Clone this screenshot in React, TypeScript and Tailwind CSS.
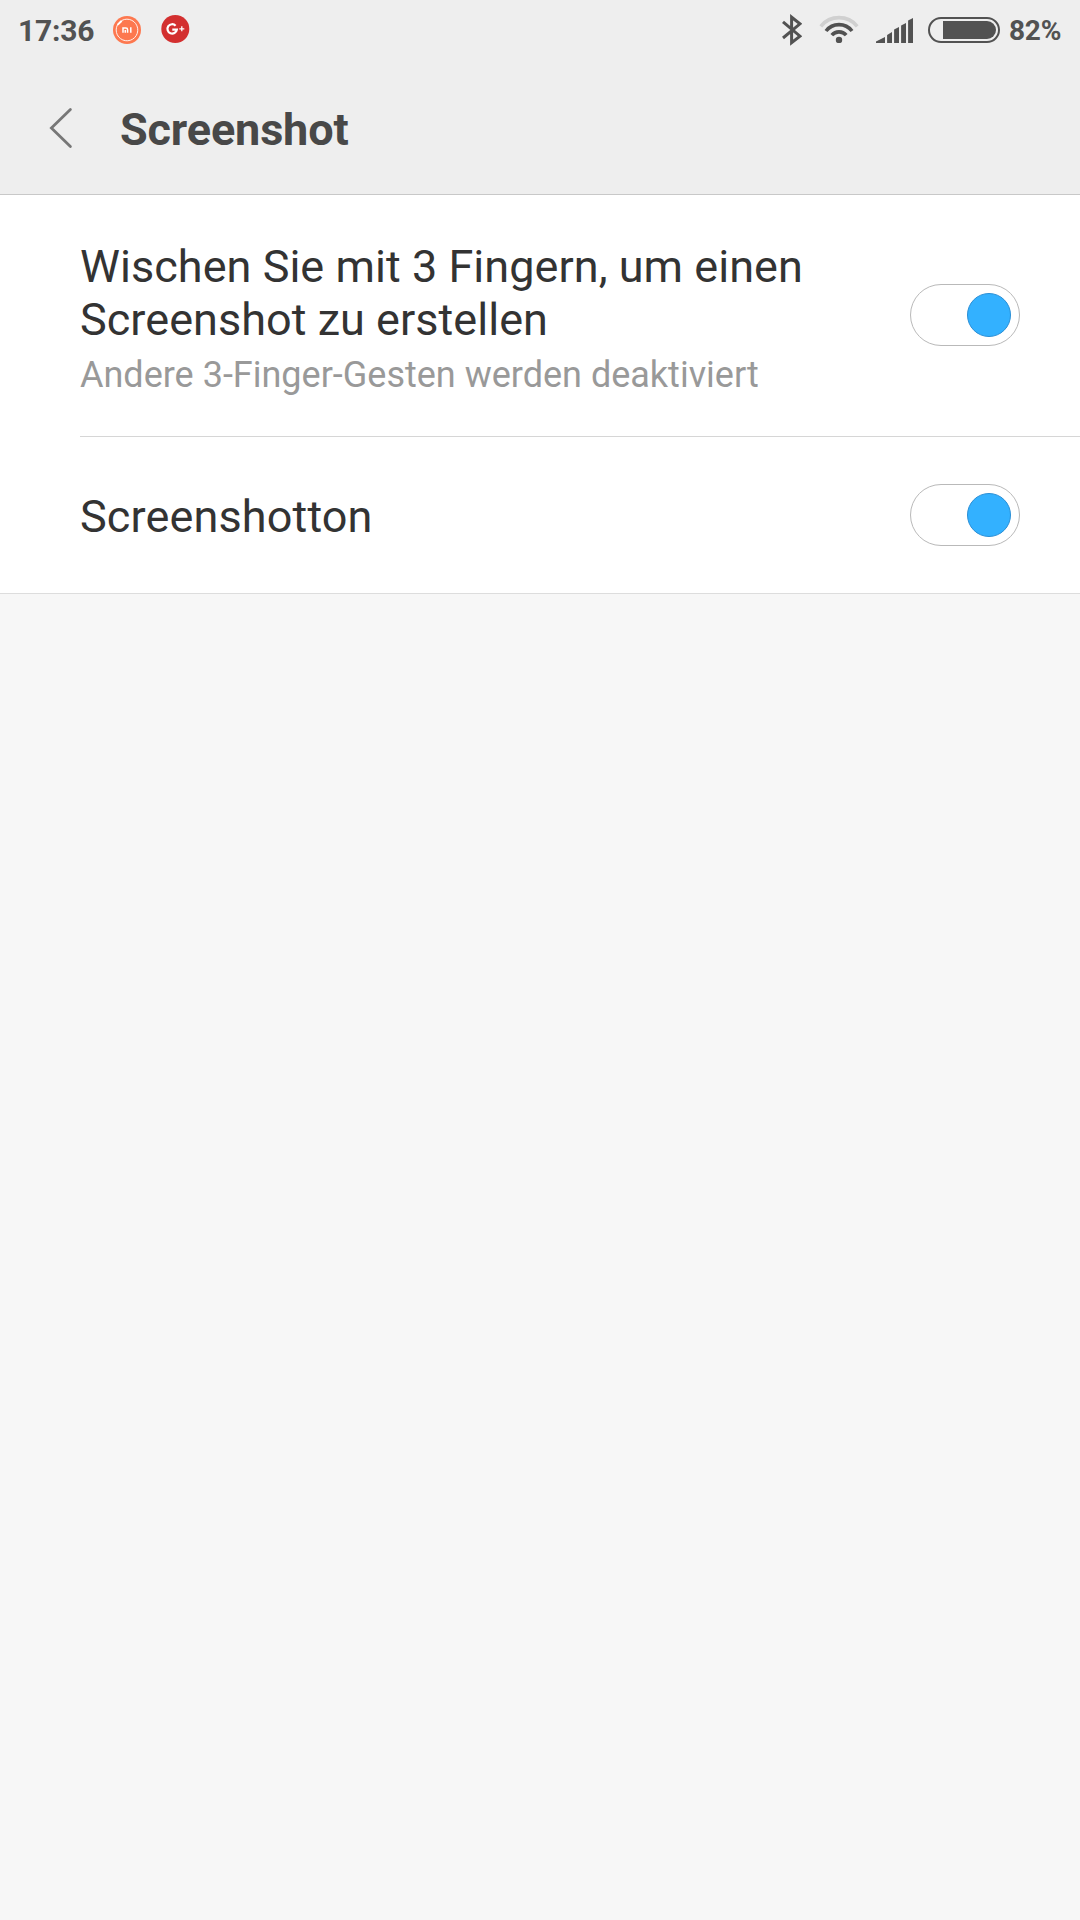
import React, { useState } from "react";

interface ToggleProps {
  checked: boolean;
  onChange: () => void;
}

const Toggle: React.FC<ToggleProps> = ({ checked, onChange }) => (
  <button
    type="button"
    role="switch"
    aria-checked={checked}
    onClick={onChange}
    className={`flex h-[62px] w-[110px] shrink-0 items-center rounded-full border border-[#b9b9b9] bg-white px-2 ${
      checked ? "justify-end" : "justify-start"
    }`}
  >
    <span
      className={`size-11 rounded-full border ${
        checked ? "border-[#2a8fd6] bg-[#33b1ff]" : "border-[#b9b9b9] bg-white"
      }`}
    />
  </button>
);

const MiIcon = () => (
  <svg className="ml-5 h-[30px] w-[30px]" viewBox="112 15 30 30" fill="none">
    <circle cx="127" cy="30" r="14" fill="#fd784f" />
    <path
      d="M122 20.4A10.8 10.8 0 1 1 117.4 25"
      stroke="#fff"
      strokeWidth="0.9"
    />
    <path d="M118 24.4L121.2 21.2" stroke="#fff" strokeWidth="2" strokeLinecap="round" />
    <path
      d="M123 32.8V28.1h2.9a1.7 1.7 0 0 1 1.7 1.7v3M125.3 29.9v2.9M130.8 27.3v5.5"
      stroke="#fff"
      strokeWidth="1.5"
    />
  </svg>
);

const GooglePlusIcon = () => (
  <svg className="ml-[18px] h-[30px] w-[30px]" viewBox="159.7 15 30 30" fill="none">
    <circle cx="175" cy="29" r="14" fill="#d32f2f" />
    <path
      d="M175.3 25.7A4.7 4.7 0 1 0 176.5 29.7H172"
      stroke="#fff"
      strokeWidth="2.2"
    />
    <path d="M179 28.8h5M181.5 26.3v5" stroke="#fff" strokeWidth="1.3" />
  </svg>
);

const BluetoothIcon = () => (
  <svg className="h-8 w-5" viewBox="782 14 20 32" fill="none">
    <path
      d="M783 21.8L800 36.2L791.6 42.6V17.2L800 23.8L783 38"
      stroke="#525252"
      strokeWidth="3"
    />
  </svg>
);

const WifiIcon = () => (
  <svg className="ml-[17px] h-8 w-10" viewBox="819 14 40 32" fill="none" strokeWidth="3.6">
    <path d="M820.8 26.3A23.5 23.5 0 0 1 857.2 26.3" stroke="#d0d0d0" />
    <path d="M826 31A16.5 16.5 0 0 1 852 31" stroke="#525252" />
    <path d="M831.8 35.2A9.5 9.5 0 0 1 846.2 35.2" stroke="#525252" />
    <circle cx="839" cy="39.9" r="3.2" fill="#525252" />
  </svg>
);

const SignalIcon = () => (
  <svg className="ml-[17px] h-8 w-[37px]" viewBox="876 14 37 32" fill="#525252">
    <path d="M876 41.5L885 37V43H876Z" />
    <path d="M887.1 35L892 32V43H887.1Z" />
    <path d="M894.1 29.5L899 27V43H894.1Z" />
    <path d="M901.1 25.5L906 23V43H901.1Z" />
    <path d="M908.1 20.5L913 18V43H908.1Z" />
  </svg>
);

const BatteryIcon = () => (
  <svg className="ml-[15px] h-8 w-[72px]" viewBox="928 14 72 32" fill="none">
    <rect x="929" y="18" width="70" height="24" rx="12" stroke="#525252" strokeWidth="2" />
    <path d="M943 21h44a9 9 0 0 1 0 18h-44z" fill="#525252" />
  </svg>
);

const StatusBar = () => (
  <div className="flex h-[60px] items-center pr-[19px] pl-[18px] font-bold text-[#525252]">
    <span className="w-[74px] text-[30px] tracking-[-0.2px] whitespace-nowrap">
      17:36
    </span>
    <MiIcon />
    <GooglePlusIcon />
    <div className="ml-auto flex items-center">
      <BluetoothIcon />
      <WifiIcon />
      <SignalIcon />
      <BatteryIcon />
      <span className="mt-0.5 ml-[9px] w-[52px] text-[28px] tracking-[-0.2px] whitespace-nowrap">
        82%
      </span>
    </div>
  </div>
);

const App: React.FC = () => {
  const [swipe, setSwipe] = useState(true);
  const [sound, setSound] = useState(true);

  return (
    <div className="min-h-screen bg-[#f7f7f7] font-['Roboto',sans-serif]">
      {/* Header */}
      <header className="h-[195px] border-b border-[#c8c8c8] bg-[#eeeeee]">
        <StatusBar />
        <div className="flex h-[134px] items-center pt-0.5 pl-12">
          <button type="button" aria-label="Zurück">
            <svg className="h-11 w-7" viewBox="48 106 28 44" fill="none">
              <path
                d="M70.4 109.5L51.4 128L70.4 146.5"
                stroke="#777"
                strokeWidth="2.8"
                strokeLinecap="round"
              />
            </svg>
          </button>
          <h1 className="mt-1 ml-11 text-[45px] font-bold tracking-[-0.15px] text-[#484848]">
            Screenshot
          </h1>
        </div>
      </header>

      {/* Settings */}
      <main className="border-b border-[#dddddd] bg-white pl-20">
        <div className="flex h-[242px] items-center justify-between border-b border-[#d6d6d6] pr-[60px] pb-px">
          <div className="pt-1.5">
            <p className="w-[760px] text-[45px] leading-[53px] tracking-[0.04px] text-[#333333]">
              Wischen Sie mit 3 Fingern, um einen Screenshot zu erstellen
            </p>
            <p className="mt-2 text-[36px] leading-[42px] text-[#999999]">
              Andere 3-Finger-Gesten werden deaktiviert
            </p>
          </div>
          <Toggle checked={swipe} onChange={() => setSwipe(!swipe)} />
        </div>
        <div className="flex h-[156px] items-center justify-between pr-[60px]">
          <p className="mt-0.5 text-[45px] leading-[53px] tracking-[0.13px] text-[#333333]">
            Screenshotton
          </p>
          <Toggle checked={sound} onChange={() => setSound(!sound)} />
        </div>
      </main>
    </div>
  );
};

export default App;
